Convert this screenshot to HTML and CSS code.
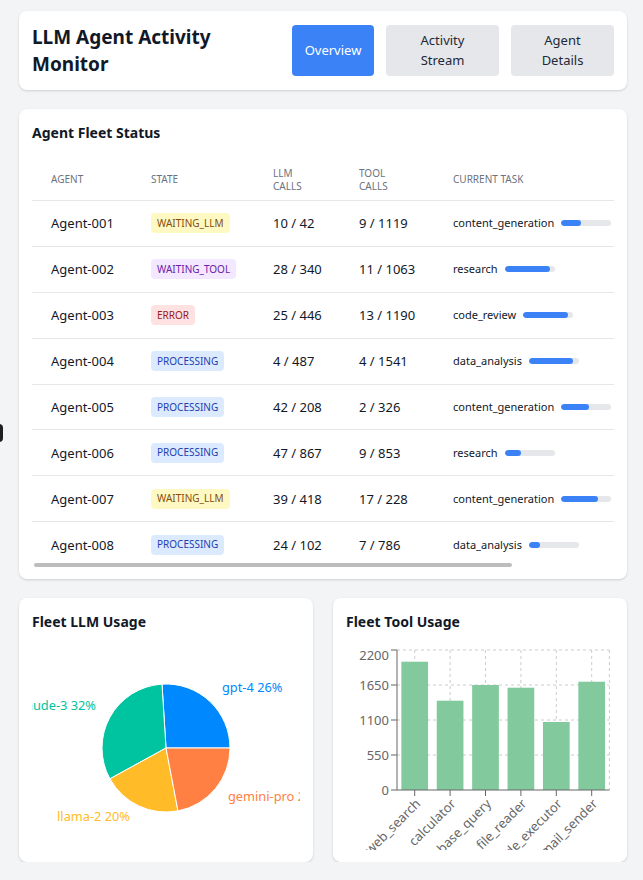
FILE: index.html
```
<!DOCTYPE html>
<html lang="en">
<head>
<meta charset="utf-8">
<title>LLM Agent Activity Monitor</title>
<link rel="stylesheet" href="styles.css">
</head>
<body>
<div class="edge-tab"></div>
<main class="page">
  <header class="card header">
    <h1 class="title">LLM Agent Activity Monitor</h1>
    <nav class="tabs">
      <button class="tab tab-active tab-overview">Overview</button>
      <button class="tab tab-stream">Activity Stream</button>
      <button class="tab tab-details">Agent Details</button>
    </nav>
  </header>

  <section class="card fleet">
    <h2 class="card-title">Agent Fleet Status</h2>
    <div class="table-scroll">
      <table class="fleet-table">
        <colgroup>
          <col class="c-agent"><col class="c-state"><col class="c-llm"><col class="c-tool"><col class="c-task">
        </colgroup>
        <thead>
          <tr><th>Agent</th><th>State</th><th>LLM Calls</th><th>Tool Calls</th><th>Current Task</th></tr>
        </thead>
        <tbody>
          <tr><td>Agent-001</td><td><span class="badge b-llm">WAITING_LLM</span></td><td>10 / 42</td><td>9 / 1119</td><td><div class="task"><span>content_generation</span><span class="bar"><span class="fill" style="width:40%"></span></span></div></td></tr>
          <tr><td>Agent-002</td><td><span class="badge b-tool">WAITING_TOOL</span></td><td>28 / 340</td><td>11 / 1063</td><td><div class="task"><span>research</span><span class="bar"><span class="fill" style="width:90%"></span></span></div></td></tr>
          <tr><td>Agent-003</td><td><span class="badge b-error">ERROR</span></td><td>25 / 446</td><td>13 / 1190</td><td><div class="task"><span>code_review</span><span class="bar"><span class="fill" style="width:89%"></span></span></div></td></tr>
          <tr><td>Agent-004</td><td><span class="badge b-proc">PROCESSING</span></td><td>4 / 487</td><td>4 / 1541</td><td><div class="task"><span>data_analysis</span><span class="bar"><span class="fill" style="width:89%"></span></span></div></td></tr>
          <tr><td>Agent-005</td><td><span class="badge b-proc">PROCESSING</span></td><td>42 / 208</td><td>2 / 326</td><td><div class="task"><span>content_generation</span><span class="bar"><span class="fill" style="width:55%"></span></span></div></td></tr>
          <tr><td>Agent-006</td><td><span class="badge b-proc">PROCESSING</span></td><td>47 / 867</td><td>9 / 853</td><td><div class="task"><span>research</span><span class="bar"><span class="fill" style="width:32%"></span></span></div></td></tr>
          <tr><td>Agent-007</td><td><span class="badge b-llm">WAITING_LLM</span></td><td>39 / 418</td><td>17 / 228</td><td><div class="task"><span>content_generation</span><span class="bar"><span class="fill" style="width:73%"></span></span></div></td></tr>
          <tr><td>Agent-008</td><td><span class="badge b-proc">PROCESSING</span></td><td>24 / 102</td><td>7 / 786</td><td><div class="task"><span>data_analysis</span><span class="bar"><span class="fill" style="width:23%"></span></span></div></td></tr>
        </tbody>
      </table>
    </div>
    <div class="scroll-thumb"></div>
  </section>

  <div class="charts">
    <section class="card chart-card">
      <h2 class="card-title">Fleet LLM Usage</h2>
      <svg class="chart" width="268" height="202" viewBox="0 0 268 202">
        <g stroke="#fff" stroke-width="1">
          <path d="M134,100 L198,100 A64,64 0 0 0 129.98,36.13 Z" fill="#0088FE"/>
          <path d="M134,100 L129.98,36.13 A64,64 0 0 0 77.92,130.83 Z" fill="#00C49F"/>
          <path d="M134,100 L77.92,130.83 A64,64 0 0 0 145.99,162.87 Z" fill="#FFBB28"/>
          <path d="M134,100 L145.99,162.87 A64,64 0 0 0 198,100 Z" fill="#FF8042"/>
        </g>
        <g class="pie-label">
          <text x="190" y="39" fill="#0088FE" text-anchor="start" dominant-baseline="central">gpt-4 26%</text>
          <text x="64" y="57" fill="#00C49F" text-anchor="end" dominant-baseline="central">claude-3 32%</text>
          <text x="98" y="168" fill="#FFBB28" text-anchor="end" dominant-baseline="central">llama-2 20%</text>
          <text x="196" y="148" fill="#FF8042" text-anchor="start" dominant-baseline="central">gemini-pro 22%</text>
        </g>
      </svg>
    </section>

    <section class="card chart-card">
      <h2 class="card-title">Fleet Tool Usage</h2>
      <svg class="chart" width="268" height="202" viewBox="0 0 268 202">
        <g stroke="#ccc" stroke-dasharray="3 3" fill="none">
          <line x1="51" y1="2" x2="263.4" y2="2"/>
          <line x1="51" y1="37" x2="263.4" y2="37"/>
          <line x1="51" y1="72" x2="263.4" y2="72"/>
          <line x1="51" y1="107" x2="263.4" y2="107"/>
          <line x1="68.7" y1="2" x2="68.7" y2="142"/>
          <line x1="104.1" y1="2" x2="104.1" y2="142"/>
          <line x1="139.5" y1="2" x2="139.5" y2="142"/>
          <line x1="174.9" y1="2" x2="174.9" y2="142"/>
          <line x1="210.3" y1="2" x2="210.3" y2="142"/>
          <line x1="245.7" y1="2" x2="245.7" y2="142"/>
          <line x1="263.4" y1="2" x2="263.4" y2="142"/>
        </g>
        <g fill="#82ca9d">
          <rect x="55.35" y="13.7" width="26.7" height="128.3"/>
          <rect x="90.75" y="52.7" width="26.7" height="89.3"/>
          <rect x="126.15" y="37" width="26.7" height="105"/>
          <rect x="161.55" y="39.7" width="26.7" height="102.3"/>
          <rect x="196.95" y="74" width="26.7" height="68"/>
          <rect x="232.35" y="33.7" width="26.7" height="108.3"/>
        </g>
        <g stroke="#666" fill="none">
          <line x1="51" y1="2" x2="51" y2="142"/>
          <line x1="51" y1="142" x2="263.4" y2="142"/>
          <line x1="45" y1="2" x2="51" y2="2"/>
          <line x1="45" y1="37" x2="51" y2="37"/>
          <line x1="45" y1="72" x2="51" y2="72"/>
          <line x1="45" y1="107" x2="51" y2="107"/>
          <line x1="45" y1="142" x2="51" y2="142"/>
          <line x1="68.7" y1="142" x2="68.7" y2="148"/>
          <line x1="104.1" y1="142" x2="104.1" y2="148"/>
          <line x1="139.5" y1="142" x2="139.5" y2="148"/>
          <line x1="174.9" y1="142" x2="174.9" y2="148"/>
          <line x1="210.3" y1="142" x2="210.3" y2="148"/>
          <line x1="245.7" y1="142" x2="245.7" y2="148"/>
        </g>
        <g class="axis-label" text-anchor="end" dominant-baseline="central">
          <text x="43" y="7">2200</text>
          <text x="43" y="37">1650</text>
          <text x="43" y="72">1100</text>
          <text x="43" y="107">550</text>
          <text x="43" y="142">0</text>
        </g>
        <g class="axis-label" text-anchor="end">
          <text x="68.7" y="150" dy="0.71em" transform="rotate(-45 68.7 150)">web_search</text>
          <text x="104.1" y="150" dy="0.71em" transform="rotate(-45 104.1 150)">calculator</text>
          <text x="139.5" y="150" dy="0.71em" transform="rotate(-45 139.5 150)">database_query</text>
          <text x="174.9" y="150" dy="0.71em" transform="rotate(-45 174.9 150)">file_reader</text>
          <text x="210.3" y="150" dy="0.71em" transform="rotate(-45 210.3 150)">code_executor</text>
          <text x="245.7" y="150" dy="0.71em" transform="rotate(-45 245.7 150)">email_sender</text>
        </g>
      </svg>
    </section>
  </div>
</main>
</body>
</html>
```

FILE: styles.css
```
* { box-sizing: border-box; }

html, body {
  margin: 0;
  background: #f3f4f6;
  font-family: "Noto Sans", "Open Sans", sans-serif;
  color: #111827;
}

.page {
  padding: 11px 16px 0 19px;
  display: flex;
  flex-direction: column;
  gap: 19px;
}

.card {
  background: #fff;
  border-radius: 8px;
  box-shadow: 0 1px 3px rgba(0, 0, 0, 0.1), 0 1px 2px rgba(0, 0, 0, 0.06);
  padding: 13px;
}

/* Header */
.header {
  display: flex;
  justify-content: space-between;
  align-items: center;
}

.title {
  margin: 0;
  max-width: 200px;
  font-size: 19px;
  line-height: 26.5px;
  font-weight: 700;
}

.tabs {
  display: flex;
  gap: 12px;
}

.tab {
  border: 0;
  border-radius: 4px;
  background: #e5e7eb;
  color: #1f2937;
  font-family: inherit;
  font-size: 13px;
  line-height: 19.5px;
  padding: 6px 12px;
  display: flex;
  align-items: center;
  justify-content: center;
  text-align: center;
}

.tab-active {
  background: #3b82f6;
  color: #fff;
}

.tab-overview { width: 82px; }
.tab-stream { width: 113px; }
.tab-details { width: 103px; }

/* Fleet table */
.fleet {
  position: relative;
  padding-bottom: 11px;
}

.card-title {
  margin: 0 0 15px;
  font-size: 14px;
  line-height: 22px;
  font-weight: 700;
  color: #111827;
}

.table-scroll {
  overflow-x: auto;
  overflow-y: hidden;
  scrollbar-width: none;
}

.table-scroll::-webkit-scrollbar { display: none; }

.fleet-table {
  width: 700px;
  table-layout: fixed;
  border-collapse: collapse;
}

.c-agent { width: 100px; }
.c-state { width: 122px; }
.c-llm { width: 86px; }
.c-tool { width: 94px; }

.fleet-table th {
  text-align: left;
  font-size: 10px;
  line-height: 12.5px;
  font-weight: 400;
  color: #6b7280;
  text-transform: uppercase;
  padding: 8px 19px;
  border-bottom: 1px solid #e5e7eb;
  vertical-align: middle;
}

.fleet-table td {
  height: 45.9px;
  font-size: 13px;
  line-height: 20px;
  padding: 0 19px;
  border-bottom: 1px solid #e5e7eb;
  white-space: nowrap;
  vertical-align: middle;
  color: #111827;
}

.fleet-table tbody tr:last-child td { border-bottom: 0; }

.badge {
  display: inline-block;
  font-size: 10px;
  line-height: 15px;
  padding: 2.5px 6px;
  border-radius: 4px;
  vertical-align: top;
}

.b-llm { background: #fef9c3; color: #854d0e; }
.b-tool { background: #f3e8ff; color: #6b21a8; }
.b-error { background: #fee2e2; color: #991b1b; }
.b-proc { background: #dbeafe; color: #1e40af; }

.task {
  display: flex;
  align-items: center;
  gap: 7px;
  font-size: 11px;
}

.bar {
  width: 50px;
  height: 6px;
  border-radius: 3px;
  background: #e5e7eb;
  display: block;
  overflow: hidden;
}

.fill {
  display: block;
  height: 100%;
  border-radius: 3px;
  background: #3b82f6;
}

.scroll-thumb {
  position: absolute;
  left: 15px;
  bottom: 12px;
  width: 478px;
  height: 4px;
  border-radius: 2px;
  background: #bdbdbd;
}

/* Charts */
.charts {
  display: grid;
  grid-template-columns: 1fr 1fr;
  gap: 20px;
}

.chart-card {
  padding: 13px 13px 12px;
}

.chart {
  display: block;
  overflow: hidden;
}

.pie-label text {
  font-family: "Noto Sans", sans-serif;
  font-size: 12.8px;
}

.axis-label text {
  font-family: "Noto Sans", sans-serif;
  font-size: 13px;
  fill: #666;
}

.edge-tab {
  position: fixed;
  left: -10px;
  top: 424px;
  width: 13px;
  height: 18px;
  border-radius: 4px;
  background: #1f1f1f;
}
```
